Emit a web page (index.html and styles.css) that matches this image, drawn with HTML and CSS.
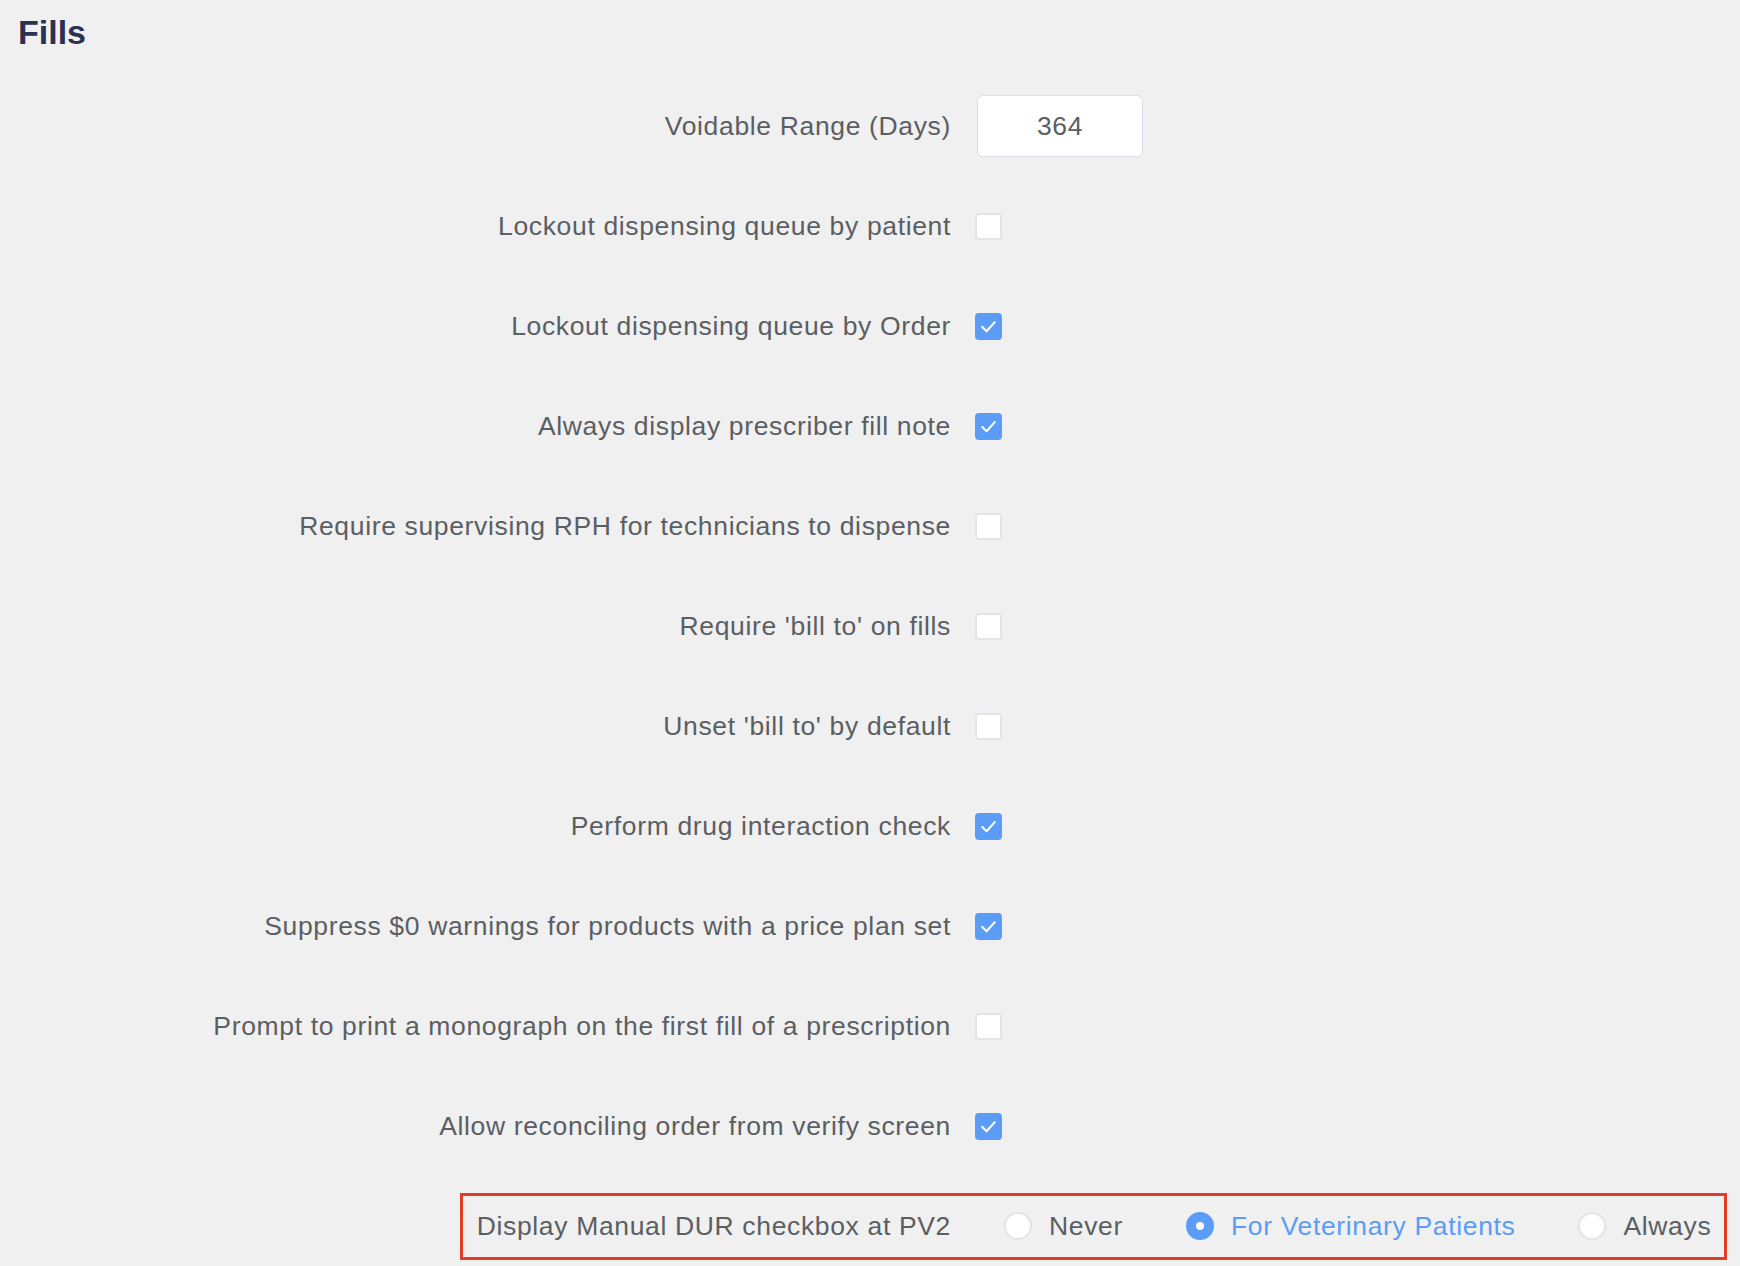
FILE: index.html
```html
<!DOCTYPE html>
<html lang="en">
<head>
<meta charset="utf-8">
<title>Fills</title>
<link rel="stylesheet" href="styles.css">
</head>
<body>
<main class="page">
  <h1 class="title">Fills</h1>
  <div class="form">
    <div class="row">
      <span class="label">Voidable Range (Days)</span>
      <div class="control"><input class="text-input" type="text" value="364"></div>
    </div>
    <div class="row">
      <span class="label">Lockout dispensing queue by patient</span>
      <div class="control"><span class="checkbox"></span></div>
    </div>
    <div class="row">
      <span class="label">Lockout dispensing queue by Order</span>
      <div class="control"><span class="checkbox is-checked"><svg viewBox="0 0 28 28"><polyline points="7.5,14.5 12,19 20.5,9.5"/></svg></span></div>
    </div>
    <div class="row">
      <span class="label">Always display prescriber fill note</span>
      <div class="control"><span class="checkbox is-checked"><svg viewBox="0 0 28 28"><polyline points="7.5,14.5 12,19 20.5,9.5"/></svg></span></div>
    </div>
    <div class="row">
      <span class="label">Require supervising RPH for technicians to dispense</span>
      <div class="control"><span class="checkbox"></span></div>
    </div>
    <div class="row">
      <span class="label">Require 'bill to' on fills</span>
      <div class="control"><span class="checkbox"></span></div>
    </div>
    <div class="row">
      <span class="label">Unset 'bill to' by default</span>
      <div class="control"><span class="checkbox"></span></div>
    </div>
    <div class="row">
      <span class="label">Perform drug interaction check</span>
      <div class="control"><span class="checkbox is-checked"><svg viewBox="0 0 28 28"><polyline points="7.5,14.5 12,19 20.5,9.5"/></svg></span></div>
    </div>
    <div class="row">
      <span class="label">Suppress $0 warnings for products with a price plan set</span>
      <div class="control"><span class="checkbox is-checked"><svg viewBox="0 0 28 28"><polyline points="7.5,14.5 12,19 20.5,9.5"/></svg></span></div>
    </div>
    <div class="row">
      <span class="label">Prompt to print a monograph on the first fill of a prescription</span>
      <div class="control"><span class="checkbox"></span></div>
    </div>
    <div class="row">
      <span class="label">Allow reconciling order from verify screen</span>
      <div class="control"><span class="checkbox is-checked"><svg viewBox="0 0 28 28"><polyline points="7.5,14.5 12,19 20.5,9.5"/></svg></span></div>
    </div>
    <div class="row row-highlight">
      <div class="highlight">
        <span class="label label-inline">Display Manual DUR checkbox at PV2</span>
        <div class="radio-group">
          <span class="radio-option"><span class="radio"></span><span class="radio-text">Never</span></span>
          <span class="radio-option is-selected"><span class="radio"></span><span class="radio-text">For Veterinary Patients</span></span>
          <span class="radio-option"><span class="radio"></span><span class="radio-text">Always</span></span>
        </div>
      </div>
    </div>
  </div>
</main>
</body>
</html>
```

FILE: styles.css
```css
html, body {
  margin: 0;
  padding: 0;
  background: #f0f0f0;
}

body {
  font-family: "Liberation Sans", Arial, Helvetica, sans-serif;
  color: #5b5e63;
}

.page {
  width: 1740px;
}

.title {
  margin: 0;
  height: 76px;
  box-sizing: border-box;
  padding: 12px 0 0 18px;
  font-size: 34px;
  line-height: 40px;
  font-weight: 700;
  color: #2b3153;
}

.form {
  display: flex;
  flex-direction: column;
}

.row {
  display: grid;
  grid-template-columns: 951px auto;
  column-gap: 24px;
  align-items: center;
  height: 100px;
}

.label {
  text-align: right;
  font-size: 26.5px;
  line-height: 32px;
  letter-spacing: 0.65px;
  white-space: nowrap;
}

.control {
  display: flex;
  align-items: center;
}

.text-input {
  width: 166px;
  height: 62px;
  box-sizing: border-box;
  margin-left: 2px;
  border: 1px solid #dcdfe6;
  border-radius: 6px;
  background: #ffffff;
  font-family: inherit;
  font-size: 26.5px;
  letter-spacing: 0.65px;
  color: #5b5e63;
  text-align: center;
  outline: none;
  padding: 0;
}

.checkbox {
  display: inline-flex;
  width: 27px;
  height: 27px;
  box-sizing: border-box;
  border: 2px solid #e2e4ea;
  border-radius: 4px;
  background: #ffffff;
}

.checkbox.is-checked {
  background: #5b9cf7;
  border-color: #5b9cf7;
}

.checkbox svg {
  width: 27px;
  height: 27px;
  margin: -2px;
  fill: none;
  stroke: #ffffff;
  stroke-width: 2.2;
  stroke-linecap: round;
  stroke-linejoin: round;
}

.row-highlight {
  display: flex;
}

.highlight {
  display: flex;
  align-items: center;
  margin-left: 460px;
  width: 1267px;
  height: 67px;
  box-sizing: border-box;
  border: 3px solid #e23d27;
  padding: 0 0 0 12px;
}

.label-inline {
  width: 476px;
  flex: none;
}

.radio-group {
  display: flex;
  flex: none;
  align-items: center;
  gap: 63px;
  margin-left: 53px;
  white-space: nowrap;
}

.radio-option {
  display: inline-flex;
  flex: none;
  align-items: center;
  gap: 17px;
  font-size: 26.5px;
  line-height: 32px;
  letter-spacing: 0.65px;
  white-space: nowrap;
}

.radio {
  flex: none;
  width: 28px;
  height: 28px;
  box-sizing: border-box;
  border: 2px solid #e2e4ea;
  border-radius: 50%;
  background: #ffffff;
  display: inline-flex;
  align-items: center;
  justify-content: center;
}

.radio-option.is-selected .radio {
  background: #5b9cf7;
  border-color: #5b9cf7;
}

.radio-option.is-selected .radio::after {
  content: "";
  width: 8px;
  height: 8px;
  border-radius: 50%;
  background: #ffffff;
}

.radio-option.is-selected .radio-text {
  color: #5b9cf7;
}
```
